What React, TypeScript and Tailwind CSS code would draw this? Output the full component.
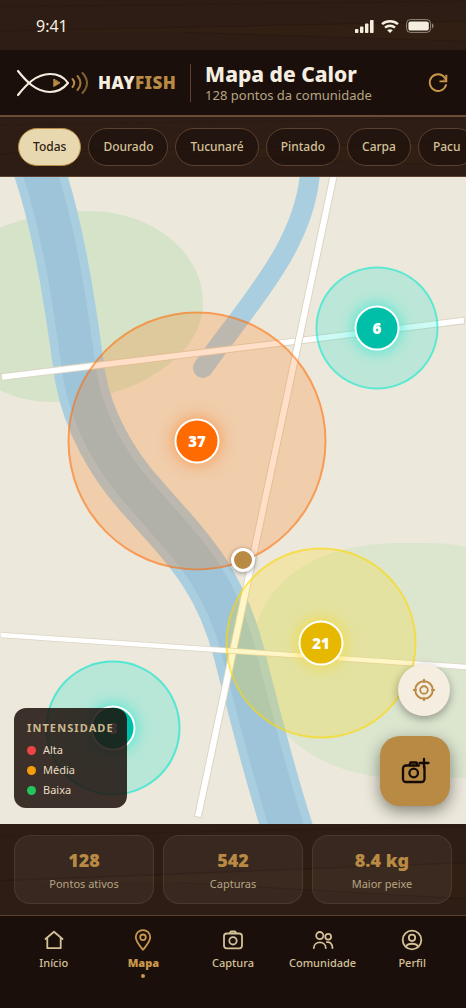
import React, { useState } from 'react';

const SPECIES = ['Todas', 'Dourado', 'Tucunaré', 'Pintado', 'Carpa', 'Pacu'];

const STATS = [
  { value: '128', label: 'Pontos ativos' },
  { value: '542', label: 'Capturas' },
  { value: '8.4 kg', label: 'Maior peixe' },
];

const LEVELS = [
  { label: 'Alta', dot: 'bg-[#ef4444]' },
  { label: 'Média', dot: 'bg-[#f59e0b]' },
  { label: 'Baixa', dot: 'bg-[#22c55e]' },
];

// Map canvas units, the SVG base map uses the same ones
const MAP_W = 466;
const MAP_H = 647;

const ZONES = [
  {
    x: 197, y: 264, count: 37,
    area: 'size-[259px] border-[#ff6b00]/50 bg-[#ff6b00]/22',
    pin: 'bg-[#ff6b00] shadow-[0_0_16px_#ff6b0099]',
  },
  {
    x: 321, y: 466, count: 21,
    area: 'size-[191px] border-[#ffd600]/55 bg-[#ffd600]/22',
    pin: 'bg-[#e6b800] shadow-[0_0_16px_#ffd600b3]',
  },
  {
    x: 377, y: 151, count: 6,
    area: 'size-[123px] border-[#00e5cc]/50 bg-[#00e5cc]/20',
    pin: 'bg-[#00bfa9] shadow-[0_0_16px_#00e5ccb3]',
  },
  {
    x: 113, y: 551, count: 8,
    area: 'size-[135px] border-[#00e5cc]/55 bg-[#00e5cc]/22',
    pin: 'bg-[#00bfa9] shadow-[0_0_16px_#00e5ccb3]',
  },
];

const place = (x: number, y: number) => ({
  left: `${(x / MAP_W) * 100}%`,
  top: `${(y / MAP_H) * 100}%`,
});

const Wood: React.FC = () => (
  <svg className="absolute inset-0 w-full h-full" viewBox="0 0 466 90" preserveAspectRatio="none" fill="none" stroke="#1a0d07" strokeOpacity="0.25" aria-hidden="true">
    <path d="M0 56 L466 38 M180 58 L466 74" />
    <path d="M0 12 L466 2" strokeOpacity="0.15" />
    <path d="M0 57 L466 39 V74 L180 58 Z" fill="#4a3020" fillOpacity="0.1" stroke="none" />
  </svg>
);

const StatusBar: React.FC = () => (
  <div className="relative h-[50px] bg-[#2e1d14]">
    <Wood />
    <div className="relative flex items-center justify-between h-full pl-9 pr-8 pt-0.5 text-[#f5eee0]">
      <span className="text-base">9:41</span>
      <div className="flex items-center gap-[7px]">
        <svg width="19" height="13" viewBox="0 0 19 13" fill="currentColor">
          <rect x="0" y="9" width="3.4" height="4" rx="0.8" />
          <rect x="5" y="6.5" width="3.4" height="6.5" rx="0.8" />
          <rect x="10" y="3.5" width="3.4" height="9.5" rx="0.8" />
          <rect x="15" y="0" width="3.6" height="13" rx="0.8" />
        </svg>
        <svg width="18" height="13" viewBox="0 0 18 13" fill="none" stroke="currentColor" strokeWidth="2.4">
          <path d="M1 4.2 C5.4 0.2 12.6 0.2 17 4.2" />
          <path d="M4 7.6 C6.8 5.1 11.2 5.1 14 7.6" />
          <path d="M9 13 L6.200 10.200 C7.800 8.800 10.200 8.800 11.800 10.200 Z" fill="currentColor" stroke="none" />
        </svg>
        <svg width="28" height="14" viewBox="0 0 28 14" fill="none">
          <rect x="0.6" y="0.6" width="24" height="12.8" rx="3.8" stroke="#f5eee0" strokeOpacity="0.5" />
          <rect x="2.4" y="2.4" width="20.4" height="9.2" rx="2.2" fill="#f5eee0" />
          <path d="M26 4.6 C28 5.2 28 8.8 26 9.4 Z" fill="#f5eee0" fillOpacity="0.5" />
        </svg>
      </div>
    </div>
  </div>
);

const Header: React.FC = () => (
  <header className="flex items-center h-[67px] pl-4 pr-[17px] bg-[#1a0f0a] border-b-2 border-[#6b4c34]">
    <svg width="73" height="28" viewBox="0 0 73 28" fill="none" strokeLinecap="round" strokeLinejoin="round" aria-hidden="true">
      <path d="M2 2 C10 12 20 23 34 23 C42 23 48 19 52 14 C48 8 42 5 34 5 C20 5 10 16 2 26" stroke="#f5eee0" strokeWidth="2.2" />
      <path d="M37.800 10.500 V17.500 L43.800 14 Z" fill="#b88a44" stroke="#b88a44" strokeWidth="1" />
      <g stroke="#b88a44" strokeWidth="2">
        <path d="M56.500 10 Q60 14 56.500 18" />
        <path d="M61.500 7 Q67.500 14 61.500 21" strokeOpacity="0.85" />
        <path d="M66.500 4 Q75.500 14 66.500 24" strokeOpacity="0.65" />
      </g>
    </svg>
    <span className="ml-[9px] text-[17px] font-black tracking-wide text-[#f5eee0]">
      HAY<span className="text-[#b88a44]">FISH</span>
    </span>
    <div className="w-px h-[38px] mx-[14px] bg-[#5c4030]" />
    <div className="flex-1">
      <h1 className="text-[21px] leading-6 font-extrabold text-[#f5eee0]">Mapa de Calor</h1>
      <p className="text-[13px] leading-[18px] text-[#b7a582]">128 pontos da comunidade</p>
    </div>
    <button type="button" aria-label="Atualizar" className="text-[#c9974a]">
      <svg width="22" height="22" viewBox="0 0 22 22" fill="none" stroke="currentColor" strokeWidth="1.9">
        <path d="M19 13 A8.300 8.300 0 1 1 17.600 5.500 L19 7.200" strokeLinecap="round" />
        <path d="M19.300 2.800 V9.400 H12.500" />
        <path d="M19.800 3.500 V9.800 H14 Z" fill="currentColor" fillOpacity="0.4" stroke="none" />
      </svg>
    </button>
  </header>
);

const RIVER = 'M38 -10 C62 60 73 150 80 199 C88 245 113 288 143 321 C178 362 218 395 239 476 C252 527 270 600 290 660';

const BaseMap: React.FC = () => (
  <svg className="absolute inset-0 w-full h-full" viewBox="0 0 466 647" preserveAspectRatio="none" fill="none" aria-hidden="true">
    <path d="M88 34 C152 34 203 75 203 126 C203 180 130 225 52 225 C-10 225 -60 180 -60 126 C-60 60 25 34 88 34 Z" fill="#d5e3c9" />
    <path d="M400 366 H430 C520 366 560 430 560 480 C560 560 520 601 460 601 H400 C310 601 252 540 252 480 C252 410 310 366 400 366 Z" fill="#dce6cf" />
    <path d="M310 -5 C305 70 245 130 203 191" stroke="#a9cee0" strokeWidth="20" strokeLinecap="round" />
    <path d={RIVER} stroke="#a9cee0" strokeWidth="51" />
    <path d={RIVER} stroke="#9dc4d9" strokeWidth="34" />
    <path d="M1 200 L465 143.500" stroke="#ddd5c2" strokeWidth="7.500" />
    <path d="M2 200 L464 143.500" stroke="#fff" strokeWidth="5.500" />
    <path d="M334 -3 L197.800 640.500" stroke="#ddd5c2" strokeWidth="8" />
    <path d="M334 -3 L198 639.500" stroke="#fff" strokeWidth="6" />
    <path d="M1 458 L466 490" stroke="#ddd5c2" strokeWidth="6" />
    <path d="M1 458 L466 490" stroke="#fff" strokeWidth="4.400" />
  </svg>
);

const Legend: React.FC = () => (
  <div className="absolute left-[14px] bottom-4 px-[13px] pt-[11px] pb-2 rounded-xl bg-[#1c0f0b]/85">
    <h2 className="text-[11px] leading-[18px] font-bold tracking-widest text-[#cdb88f]">INTENSIDADE</h2>
    <ul className="mt-[3px]">
      {LEVELS.map(level => (
        <li key={level.label} className="flex items-center gap-[7px] h-5 text-[11px] text-[#e8dcc4]">
          <span className={`size-[9px] rounded-full ${level.dot}`} />
          {level.label}
        </li>
      ))}
    </ul>
  </div>
);

const HeatMap: React.FC = () => (
  <main className="relative flex-1 min-h-[400px] overflow-hidden bg-[#ece8db]">
    <BaseMap />
    {ZONES.map(zone => (
      <div
        key={`${zone.x}-${zone.y}`}
        style={place(zone.x, zone.y)}
        className={`absolute flex items-center justify-center -translate-1/2 rounded-full border-2 ${zone.area}`}
      >
        <button type="button" className={`size-[45px] rounded-full border-2 border-white text-[15px] font-black text-white ${zone.pin}`}>
          {zone.count}
        </button>
      </div>
    ))}
    <div
      style={place(243, 383)}
      className="absolute size-6 -translate-1/2 rounded-full border-3 border-white bg-[#b88a44] shadow-[0_1px_5px_#00000066]"
    />
    <Legend />
    <div className="absolute right-4 bottom-[18px] flex flex-col items-end gap-5">
      <button type="button" aria-label="Minha localização" className="flex items-center justify-center size-[52px] rounded-full bg-[#f4ede0] text-[#b88a44] shadow-[0_3px_10px_#00000059]">
        <svg width="24" height="24" viewBox="0 0 24 24" fill="none" stroke="currentColor" strokeWidth="1.900" strokeLinecap="round">
          <circle cx="12" cy="12" r="8.800" />
          <circle cx="12" cy="12" r="3.800" />
          <path d="M12 1.800 V4 M12 20 V22.200 M1.800 12 H4 M20 12 H22.200" />
        </svg>
      </button>
      <button type="button" aria-label="Nova captura" className="flex items-center justify-center size-[70px] rounded-[20px] bg-[#b88a44] text-[#150b06] shadow-[0_5px_16px_#00000073]">
        <svg width="30" height="28" viewBox="0 0 30 28" fill="none" stroke="currentColor" strokeWidth="2.3" strokeLinecap="round" strokeLinejoin="round">
          <path d="M19 8.500 H6 A3 3 0 0 0 3 11.500 V22 A3 3 0 0 0 6 25 H21.500 A3 3 0 0 0 24.500 22 V10" />
          <path d="M9.500 8 L10.500 5.500 H16.500 L17.500 8" />
          <circle cx="13.700" cy="16" r="4.300" />
          <path d="M24 2 V10.500 M19.500 6 H28.500" />
        </svg>
      </button>
    </div>
  </main>
);

const TABS = [
  { label: 'Início', icon: <path d="M3.500 11 L12 3.800 L20.500 11 M5.300 9.800 V20.200 H18.700 V9.800" /> },
  {
    label: 'Mapa',
    icon: (
      <>
        <path d="M12 21.800 C9 17.800 4.800 13.800 4.800 9.300 A7.200 7.200 0 0 1 19.200 9.300 C19.200 13.800 15 17.800 12 21.800 Z" />
        <circle cx="12" cy="9.300" r="2.800" />
      </>
    ),
  },
  {
    label: 'Captura',
    icon: (
      <>
        <rect x="3" y="5.500" width="18" height="14.800" rx="2.800" />
        <path d="M8.800 5.200 L9.800 3.500 H14.200 L15.200 5.200" />
        <circle cx="12" cy="12.800" r="3.700" />
      </>
    ),
  },
  {
    label: 'Comunidade',
    icon: (
      <>
        <circle cx="8.800" cy="7.600" r="3.600" />
        <path d="M2.800 20 C2.800 12.600 14.800 12.600 14.800 20" />
        <circle cx="17.200" cy="8.800" r="2.900" />
        <path d="M15.800 14.200 C19 13.600 21.500 15.800 21.500 20" />
      </>
    ),
  },
  {
    label: 'Perfil',
    icon: (
      <>
        <circle cx="12" cy="12" r="9.300" />
        <circle cx="12" cy="9.800" r="3.200" />
        <path d="M6 18.600 C8 14.800 16 14.800 18 18.600" />
      </>
    ),
  },
];

const App: React.FC = () => {
  const [species, setSpecies] = useState('Todas');
  const [tab, setTab] = useState('Mapa');

  return (
    <div className="flex flex-col min-h-screen bg-[#1a0f0a] font-['Noto_Sans',sans-serif]">
      <StatusBar />
      <Header />

      <div className="relative h-[60px] overflow-hidden bg-[#2e1d14] border-b border-[#5c4030]">
        <Wood />
        <div className="relative flex items-center gap-[7px] h-full pl-[18px]">
          {SPECIES.map(name => (
            <button
              key={name}
              type="button"
              onClick={() => setSpecies(name)}
              className={`shrink-0 h-[38px] px-[14px] rounded-full border text-xs font-medium ${
                species === name
                  ? 'bg-[#e8d8b0] border-[#b88a44] text-[#2e1d14]'
                  : 'bg-[#1a0f0a]/60 border-[#5c4030] text-[#d4c198]'
              }`}
            >
              {name}
            </button>
          ))}
        </div>
      </div>

      <HeatMap />

      <section className="relative bg-[#2e1d14]">
        <Wood />
        <div className="relative grid grid-cols-3 gap-[9px] px-[14px] py-[11px]">
          {STATS.map(stat => (
            <div key={stat.label} className="h-[69px] pt-3 rounded-2xl border border-white/8 bg-white/5 text-center">
              <div className="text-lg leading-6 font-black text-[#b88a44]">{stat.value}</div>
              <div className="text-[11px] leading-6 text-[#b7a582]">{stat.label}</div>
            </div>
          ))}
        </div>
      </section>

      <nav className="flex h-[93px] px-[9px] pt-3 bg-[#1a0f0a] border-t border-[#5c4030]">
        {TABS.map(item => {
          const active = tab === item.label;
          return (
            <button
              key={item.label}
              type="button"
              onClick={() => setTab(item.label)}
              className={`flex flex-1 basis-0 flex-col items-center ${active ? 'text-[#c9974a] font-black' : 'text-[#d4c198] font-medium'}`}
            >
              <svg width="24" height="24" viewBox="0 0 24 24" fill="none" stroke="currentColor" strokeWidth="1.800" strokeLinecap="round" strokeLinejoin="round">
                {item.icon}
              </svg>
              <span className="mt-0.5 text-[11px] leading-[18px]">{item.label}</span>
              {active && <span className="mt-0.5 size-1 rounded-full bg-[#c9974a]" />}
            </button>
          );
        })}
      </nav>
    </div>
  );
};

export default App;
